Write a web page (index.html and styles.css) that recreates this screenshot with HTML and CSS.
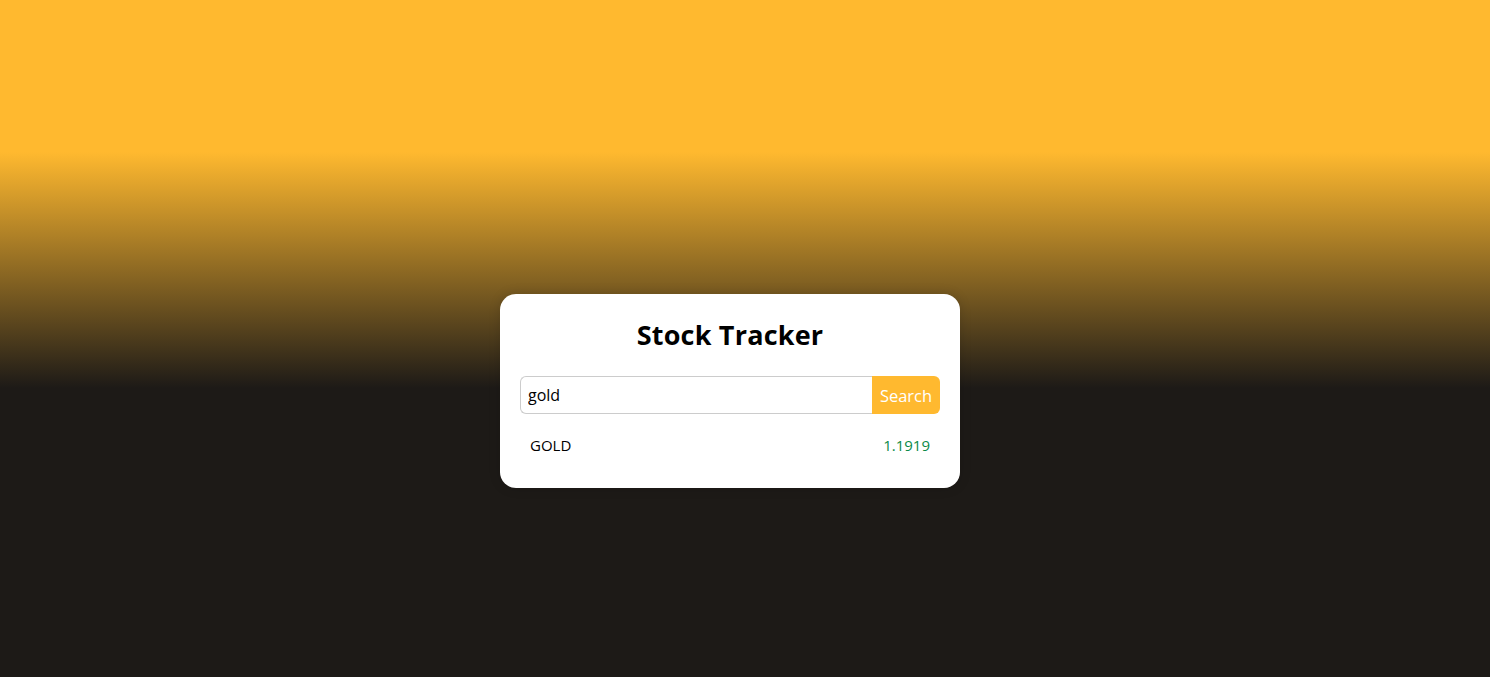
FILE: index.html
```html
<!DOCTYPE html>
<html lang="en">
<head>
<meta charset="utf-8">
<title>Stock Tracker</title>
<link rel="stylesheet" href="styles.css">
</head>
<body>
<main class="page">
  <section class="card">
    <h1 class="title">Stock Tracker</h1>
    <form class="search">
      <input class="search-input" type="text" value="gold">
      <button class="search-btn" type="button">Search</button>
    </form>
    <ul class="results">
      <li class="result"><span class="symbol">GOLD</span><span class="price">1.1919</span></li>
    </ul>
  </section>
</main>
</body>
</html>
```
FILE: styles.css
```css
* { box-sizing: border-box; }
html, body { margin: 0; padding: 0; height: 100%; }
body {
  font-family: "Open Sans", "Noto Sans", sans-serif;
  background: linear-gradient(to bottom, #ffb92f 0px, #ffb92f 152px, #1d1a17 388px, #1d1a17 100%);
  color: #000;
}
.page {
  height: 677px;
  display: flex;
  align-items: flex-start;
  justify-content: center;
  padding: 294px 30px 0 0;
}
.card {
  width: 460px;
  background: #fff;
  border-radius: 16px;
  padding: 20px 20px 31px;
  box-shadow: 0 0 12px rgba(0,0,0,0.15);
}
.title {
  margin: 0 0 20px;
  text-align: center;
  font-size: 27px;
  font-weight: 700;
  line-height: 42px;
  letter-spacing: 0.2px;
}
.search {
  display: flex;
  height: 38px;
  margin: 0;
}
.search-input {
  flex: 1;
  min-width: 0;
  border: 1px solid #cccccc;
  border-right: none;
  border-radius: 6px 0 0 6px;
  padding: 0 7px;
  font-family: inherit;
  font-size: 16px;
  color: #000;
  outline: none;
}
.search-btn {
  width: 68px;
  border: none;
  background: #ffb92f;
  color: #fff;
  font-family: inherit;
  font-size: 16.5px;
  border-radius: 0 6px 6px 0;
  padding: 0;
  cursor: pointer;
}
.results {
  list-style: none;
  margin: 19px 0 0;
  padding: 0;
}
.result {
  display: flex;
  justify-content: space-between;
  padding: 0 10px;
  font-size: 15px;
  line-height: 24px;
}
.price { color: #0b8a48; }
```
